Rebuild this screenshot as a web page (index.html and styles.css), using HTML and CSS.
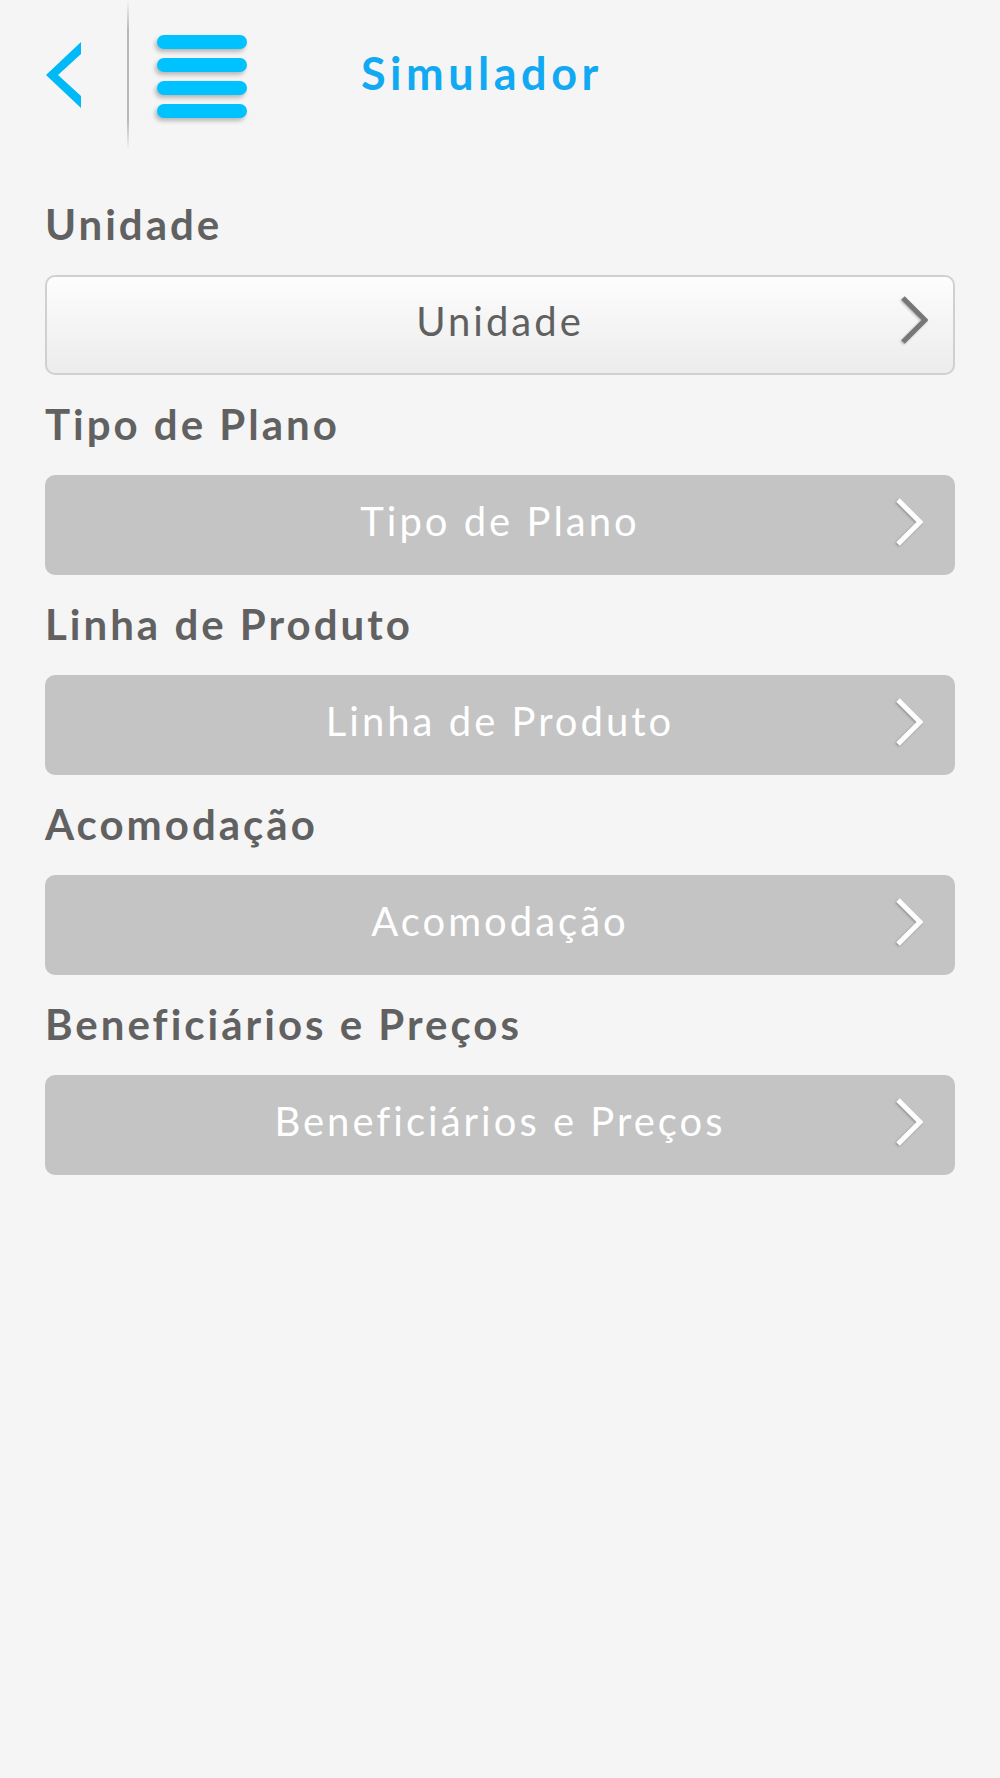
FILE: index.html
```html
<!DOCTYPE html>
<html lang="pt-BR">
<head>
    <meta charset="UTF-8">
    <meta name="viewport" content="width=device-width, initial-scale=1.0">
    <title>Simulador</title>
    <link rel="stylesheet" href="styles.css">
</head>
<body>
    <header class="topbar">
        <button class="back-btn" aria-label="Voltar">
            <svg width="35" height="66" viewBox="0 0 35 66">
                <polygon points="35,0 35,12 12,33 35,54 35,66 0,33" fill="#00b9f7"/>
            </svg>
        </button>
        <span class="divider"></span>
        <button class="menu-btn" aria-label="Menu">
            <span class="bar"></span>
            <span class="bar"></span>
            <span class="bar"></span>
            <span class="bar"></span>
        </button>
        <h1 class="title">Simulador</h1>
    </header>

    <main class="form">
        <section class="field">
            <h2 class="field-label">Unidade</h2>
            <button class="select-btn active">
                Unidade
                <svg class="chevron" width="28" height="48" viewBox="0 0 28 48"><polyline points="3,2 25,24 3,46" /></svg>
            </button>
        </section>
        <section class="field">
            <h2 class="field-label">Tipo de Plano</h2>
            <button class="select-btn">
                Tipo de Plano
                <svg class="chevron" width="28" height="48" viewBox="0 0 28 48"><polyline points="3,2 25,24 3,46" /></svg>
            </button>
        </section>
        <section class="field">
            <h2 class="field-label">Linha de Produto</h2>
            <button class="select-btn">
                Linha de Produto
                <svg class="chevron" width="28" height="48" viewBox="0 0 28 48"><polyline points="3,2 25,24 3,46" /></svg>
            </button>
        </section>
        <section class="field">
            <h2 class="field-label">Acomodação</h2>
            <button class="select-btn">
                Acomodação
                <svg class="chevron" width="28" height="48" viewBox="0 0 28 48"><polyline points="3,2 25,24 3,46" /></svg>
            </button>
        </section>
        <section class="field">
            <h2 class="field-label">Beneficiários e Preços</h2>
            <button class="select-btn">
                Beneficiários e Preços
                <svg class="chevron" width="28" height="48" viewBox="0 0 28 48"><polyline points="3,2 25,24 3,46" /></svg>
            </button>
        </section>
    </main>
</body>
</html>
```

FILE: styles.css
```css
body {
    margin: 0;
    font-family: Lato, "Open Sans", sans-serif;
    background-color: #f5f5f5;
    color: #606060;
}

button {
    font-family: inherit;
    border: none;
    background: none;
    padding: 0;
    cursor: pointer;
}

.topbar {
    display: flex;
    align-items: center;
    height: 150px;
    padding-left: 46px;
}

.back-btn {
    display: flex;
    width: 35px;
    height: 66px;
}

.divider {
    width: 2px;
    height: 150px;
    margin-left: 46px;
    background: linear-gradient(to bottom, rgba(170,170,170,0), #b8b8b8 20%, #b8b8b8 80%, rgba(170,170,170,0));
}

.menu-btn {
    display: flex;
    flex-direction: column;
    gap: 9px;
    width: 90px;
    margin-left: 28px;
    margin-top: 3px;
}

.bar {
    display: block;
    height: 14px;
    border-radius: 7px;
    background-color: #00c2ff;
    box-shadow: -2px 3px 4px rgba(0, 0, 0, 0.25);
}

.title {
    margin: 0 0 4px 114px;
    font-size: 45px;
    font-weight: 700;
    letter-spacing: 4.5px;
    color: #12a9f3;
}

.form {
    padding: 49px 45px 0;
}

.field {
    display: flex;
    flex-direction: column;
    margin-bottom: 24px;
}

.field-label {
    margin: 0 0 26px;
    font-size: 42px;
    line-height: 50px;
    font-weight: 700;
    letter-spacing: 3px;
    color: #616161;
}

.select-btn {
    position: relative;
    height: 100px;
    padding-bottom: 8px;
    border-radius: 10px;
    background-color: #c4c4c4;
    color: #ffffff;
    font-size: 40px;
    letter-spacing: 3px;
    text-align: center;
}

.select-btn.active {
    border: 2px solid #d0d0d0;
    background: linear-gradient(to bottom, #fdfdfd, #ececec);
    color: #606060;
}

.chevron {
    position: absolute;
    right: 32px;
    top: 23px;
    fill: none;
    stroke: #ffffff;
    stroke-width: 5;
    filter: drop-shadow(-1px 1px 1px rgba(0, 0, 0, 0.25));
}

.select-btn.active .chevron {
    stroke: #777777;
    top: 19px;
    right: 25px;
}
```
